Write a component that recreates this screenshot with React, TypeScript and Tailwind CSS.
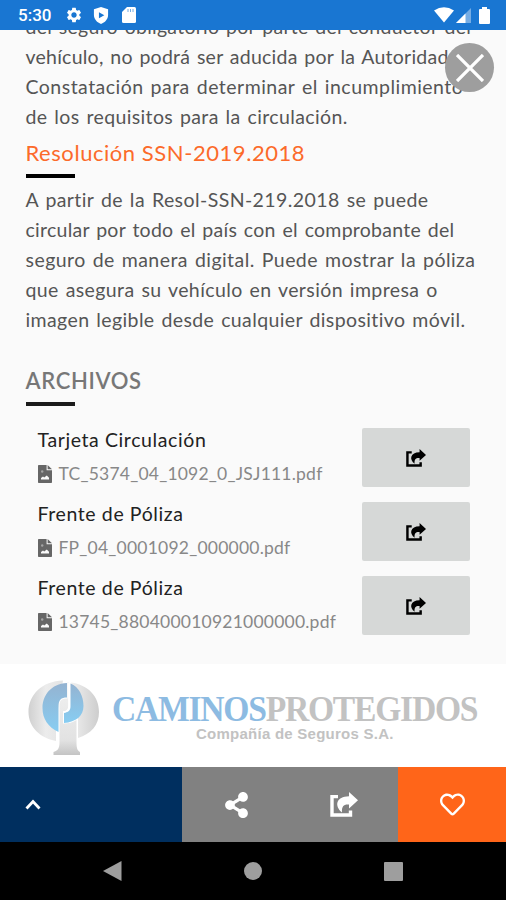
import { FaRegHeart, FaShareAlt } from "react-icons/fa";
import { MdSettings } from "react-icons/md";

const notice = [
  { text: "del seguro obligatorio por parte del conductor del", tracking: "tracking-[0.26px]" },
  { text: "vehículo, no podrá ser aducida por la Autoridad", tracking: "tracking-[0.24px]" },
  { text: "Constatación para determinar el incumplimiento", tracking: "tracking-[0.48px]" },
  { text: "de los requisitos para la circulación.", tracking: "tracking-[0.37px]" },
];

const resolution = [
  { text: "A partir de la Resol-SSN-219.2018 se puede", tracking: "tracking-[0.42px]" },
  { text: "circular por todo el país con el comprobante del", tracking: "tracking-[0.26px]" },
  { text: "seguro de manera digital. Puede mostrar la póliza", tracking: "tracking-[0.45px]" },
  { text: "que asegura su vehículo en versión impresa o", tracking: "tracking-[0.4px]" },
  { text: "imagen legible desde cualquier dispositivo móvil.", tracking: "tracking-[0.39px]" },
];

const files = [
  { title: "Tarjeta Circulación", name: "TC_5374_04_1092_0_JSJ111.pdf" },
  { title: "Frente de Póliza", name: "FP_04_0001092_000000.pdf" },
  { title: "Frente de Póliza", name: "13745_880400010921000000.pdf" },
];

function ShareIcon({ className }: { className: string }) {
  return (
    <svg viewBox="0 0 28 25" className={className} fill="none">
      <path d="M8 4.600H2V23H20.500V18.500" stroke="currentColor" strokeWidth="3.400" />
      <path d="M19 0L28 8.300L19 16.400V12.500C14 12 11.500 14 12 20.500C4 14 6 4.600 19 4.300Z" fill="currentColor" />
    </svg>
  );
}

function FileIcon() {
  return (
    <svg viewBox="0 0 14 18" className="w-[14px] h-[18px] text-[#666]">
      <path d="M0.8 0H8.6V5.2H14V17.2Q14 18 13.2 18H0.8Q0 18 0 17.2V0.8Q0 0 0.8 0Z" fill="currentColor" />
      <path d="M9.600 0L14 4.300H9.600Z" fill="currentColor" />
      <path d="M3 14.500V13L5 11.500L6.200 12.500L8.800 10.500L11 12.800V14.500Z" fill="#fafafa" />
      <circle cx="4.200" cy="6.500" r="1.200" fill="#a4a4a4" />
    </svg>
  );
}

function Logo() {
  return (
    <svg viewBox="0 0 72 76" className="w-[72px] h-[76px] shrink-0">
      <defs>
        <linearGradient id="silver" x1="0" y1="0" x2="1" y2="0">
          <stop offset="0" stopColor="#d0d0d0" />
          <stop offset="0.5" stopColor="#ececec" />
          <stop offset="1" stopColor="#e4e4e4" />
        </linearGradient>
        <linearGradient id="silverRight" x1="0" y1="0" x2="1" y2="0">
          <stop offset="0" stopColor="#f0f0f0" />
          <stop offset="1" stopColor="#cdcdcd" />
        </linearGradient>
        <linearGradient id="stem" x1="0" y1="0" x2="0" y2="1">
          <stop offset="0" stopColor="#f2f2f2" />
          <stop offset="0.8" stopColor="#e2e2e2" />
          <stop offset="1" stopColor="#c4c4c4" />
        </linearGradient>
        <linearGradient id="sky" x1="0" y1="0" x2="0" y2="1">
          <stop offset="0" stopColor="#94b3d1" />
          <stop offset="1" stopColor="#87cdf2" />
        </linearGradient>
      </defs>
      <path d="M35 0.500C14 1 0.500 15 0.500 32C0.500 47 12 58 28 61V40Z" fill="url(#silver)" />
      <path d="M43 2.500C60 5 71 16 71 32C71 45 63 54 50 58V38Z" fill="url(#silverRight)" />
      <path d="M39 3C23 4 14.500 15 14.500 28C14.500 39 20 47 30.500 52V26C30.500 20 33 17.500 39 17.500Z" fill="url(#sky)" />
      <path d="M42.500 3.500C51 7 55.500 16 55.500 26C55.500 36 48 42 36 43V33C41 32 42.500 30 42.500 26Z" fill="url(#sky)" />
      <path d="M31.500 25C31.500 20 34 18.500 39.500 18.500V2H40.500V26C40.500 30 38 31.500 35 31.500V43.500C41 43.500 45 42.500 48.500 40V63C48.500 69 50 71 52 72V75H25.500V72C29 71 31.500 69 31.500 63Z" fill="url(#stem)" />
      <path d="M41 3V26C41 30 39 32 35 32" stroke="#fff" strokeWidth="1.500" fill="none" />
    </svg>
  );
}

function StatusBar() {
  return (
    <div className="relative z-10 flex h-[30px] items-center bg-[#1976d2] pl-[18px] text-white">
      <span className="w-[47px] font-[Roboto] text-[17px] leading-none font-medium">5:30</span>
      <MdSettings className="size-[18px]" />
      <svg viewBox="0 0 16 18" className="ml-[10px] h-[17px] w-[16px]">
        <path d="M8 0L15.500 2.500V8.500C15.500 13 12 16.500 8 18C4 16.500 0.500 13 0.500 8.500V2.500Z" fill="#fff" />
        <path d="M5.800 5.500L11.500 8.700L5.800 11.900Z" fill="#1976d2" />
      </svg>
      <svg viewBox="0 0 14 16" className="ml-[13px] h-[16px] w-[14px]">
        <path d="M5 0H12.500Q14 0 14 1.500V14.500Q14 16 12.500 16H1.500Q0 16 0 14.500V5Z" fill="#fff" />
        <path d="M6 2V5M8.500 2V5M11 2V5" stroke="#1976d2" strokeOpacity="0.6" />
      </svg>
      <div className="ml-auto flex items-center pr-[16px]">
        <svg viewBox="0 0 20 16" className="h-[16px] w-[20px]">
          <path d="M0 3.500Q10 -3 20 3.500L10 15.500Z" fill="#fff" />
        </svg>
        <svg viewBox="0 0 15 15" className="ml-[2px] h-[15px] w-[15px]">
          <path d="M15 0V15H0Z" fill="#fff" opacity="0.4" />
          <path d="M9.500 5.500V15H0Z" fill="#fff" />
        </svg>
        <svg viewBox="0 0 11 17" className="ml-[8px] h-[17px] w-[11px]">
          <path d="M3 0H8V2H10Q11 2 11 3V16Q11 17 10 17H1Q0 17 0 16V3Q0 2 1 2H3Z" fill="#fff" />
        </svg>
      </div>
    </div>
  );
}

function Paragraph({ lines }: { lines: { text: string; tracking: string }[] }) {
  return (
    <p className="text-[19.5px] leading-[30px] [word-spacing:1.5px] whitespace-nowrap text-[#555]">
      {lines.map((line) => (
        <span key={line.text} className={`block ${line.tracking}`}>{line.text}</span>
      ))}
    </p>
  );
}

export default function App() {
  return (
    <div className="relative flex h-[900px] w-[506px] flex-col overflow-hidden bg-[#fafafa] font-[Lato,sans-serif]">
      <StatusBar />
      <button className="absolute top-[43px] right-[12px] z-10 flex size-[49px] items-center justify-center rounded-full bg-[#9e9e9e]">
        <svg viewBox="0 0 28 28" className="size-[28px]" stroke="#fff" strokeWidth="3.300">
          <path d="M1 1L27 27M27 1L1 27" />
        </svg>
      </button>

      <main className="h-[634px] px-[25.5px]">
        <div className="-mt-[18px]">
          <Paragraph lines={notice} />
        </div>
        <h2 className="mt-[6px] text-[22px] leading-[30px] tracking-[0.55px] whitespace-nowrap text-[#fc6a2a]">Resolución SSN-2019.2018</h2>
        <div className="mt-[6px] mb-[7px] h-[4px] w-[49px] bg-black" />
        <Paragraph lines={resolution} />
        <h2 className="mt-[31px] text-[22px] leading-[30px] font-semibold tracking-[0.65px] whitespace-nowrap text-[#777]">ARCHIVOS</h2>
        <div className="mt-[6px] h-[4px] w-[49px] bg-[#1b1b1b]" />
        <ul className="mt-[22px] flex flex-col gap-[15px] pr-[10.5px] pl-[12px]">
          {files.map((file) => (
            <li key={file.name} className="flex h-[59px] justify-between">
              <div className="whitespace-nowrap">
                <h3 className="text-[19.5px] leading-[24px] tracking-[0.6px] text-[#222]">{file.title}</h3>
                <div className="mt-[10px] flex items-center gap-[7px]">
                  <FileIcon />
                  <span className="text-[17.5px] leading-[24px] tracking-[0.22px] text-[#888]">{file.name}</span>
                </div>
              </div>
              <button className="flex w-[108px] items-center justify-center rounded-[2px] bg-[#d6d8d7]">
                <ShareIcon className="h-[18px] w-[20px] text-black" />
              </button>
            </li>
          ))}
        </ul>
      </main>

      <div className="flex h-[103px] items-center bg-white pt-[4px] pl-[28px]">
        <Logo />
        <div className="ml-[12px] text-[#c2c2c2]">
          <div className="w-[400px] origin-left scale-x-[0.96] font-['Liberation_Serif',serif] text-[35px] leading-[36px] font-bold tracking-[-1.300px] whitespace-nowrap">
            <span className="text-[#8dbbe2]">CAMINOS</span>PROTEGIDOS
          </div>
          <div className="-mt-[3px] pl-[84px] font-['Liberation_Sans',sans-serif] text-[15px] leading-[18px] font-bold tracking-[0.25px] whitespace-nowrap">Compañía de Seguros S.A.</div>
        </div>
      </div>

      <div className="flex h-[75px] text-white">
        <div className="flex w-[182px] items-center bg-[#002f5f] pl-[25px]">
          <svg viewBox="0 0 16 11" className="h-[11px] w-[16px]" fill="none">
            <path d="M1.500 9.500L8 2.500L14.500 9.500" stroke="#fff" strokeWidth="2.800" />
          </svg>
        </div>
        <div className="flex w-[108px] items-center justify-center bg-[#818181]">
          <FaShareAlt className="h-[26px] w-[23px]" />
        </div>
        <div className="flex w-[108px] items-center justify-center bg-[#818181]">
          <ShareIcon className="h-[25px] w-[28px]" />
        </div>
        <div className="flex w-[108px] items-center justify-center bg-[#ff6519]">
          <FaRegHeart className="size-[25px]" />
        </div>
      </div>

      <nav className="flex h-[58px] items-center bg-black pl-[103px]">
        <svg viewBox="0 0 19 20" className="h-[20px] w-[19px]">
          <path d="M0 10L18.500 0V20Z" fill="#9e9e9e" />
        </svg>
        <div className="ml-[122px] size-[18px] rounded-full bg-[#9e9e9e]" />
        <div className="ml-[122px] size-[19px] rounded-[1px] bg-[#9e9e9e]" />
      </nav>
    </div>
  );
}
